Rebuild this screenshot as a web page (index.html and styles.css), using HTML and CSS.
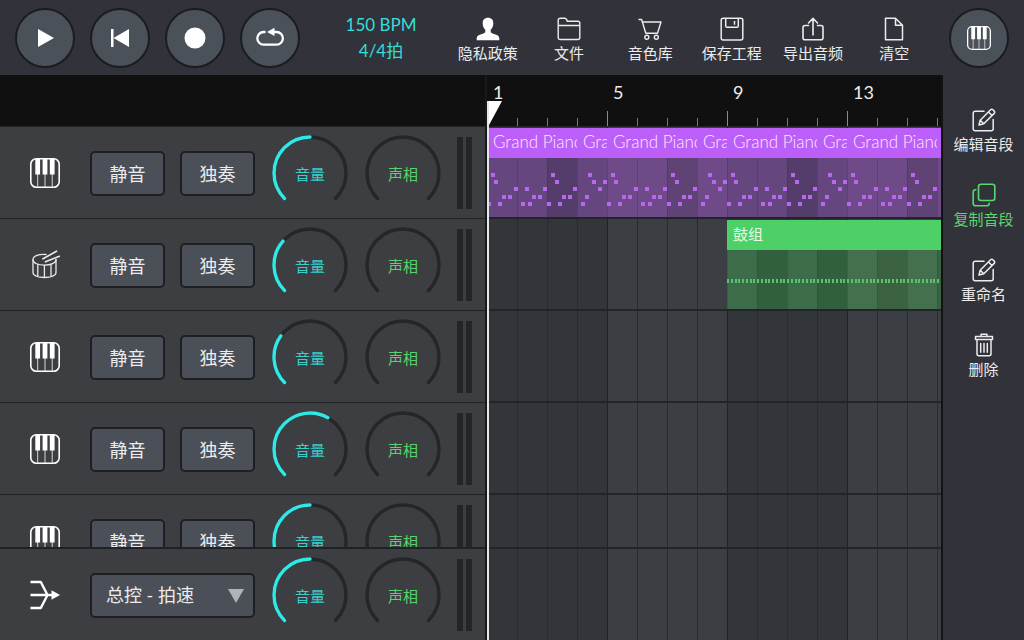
FILE: index.html
```html
<!DOCTYPE html>
<html lang="zh-CN">
<head>
<meta charset="utf-8">
<meta name="viewport" content="width=device-width, initial-scale=1">
<title>音轨编辑</title>
<link rel="stylesheet" href="styles.css">
</head>
<body>
<svg class="defs" aria-hidden="true">
  <symbol id="piano" viewBox="0 0 30 30">
    <rect x="0.8" y="0.8" width="28.4" height="28.4" rx="5.500" fill="none" stroke="#fff" stroke-width="1.6"/>
    <path d="M5.300 1h4.800v15.500H5.300zM12.600 1h4.800v15.500h-4.800zM19.800 1h4.800v15.500h-4.800z" fill="#fff"/>
    <path d="M7.700 16v13M15 16v13M22.200 16v13" stroke="#fff" stroke-width="0.8"/>
  </symbol>
  <symbol id="drum" viewBox="0 0 30 30">
    <g fill="none" stroke="#e8e8e8" stroke-width="1.300" stroke-linecap="round">
      <path d="M16 4.500C9 3.800 3 6 3 9.800c0 3.400 5.300 5.400 11.500 5.400S26 13 26 9.800"/>
      <path d="M3 10v12.500c0 3 5 5 11.500 5s11.500-2 11.500-5V9.500M7.800 14.500v12M14.400 15.300v12M21 14.500v12"/>
      <path d="M13 8.800L26.500 1.200M15.500 11.800L29.400 6.300" stroke-width="1.700"/>
    </g>
  </symbol>
  <symbol id="edit" viewBox="0 0 24 24">
    <g fill="none" stroke="currentColor" stroke-width="1.500" stroke-linecap="round" stroke-linejoin="round">
      <path d="M12 3.200H3.200a2 2 0 0 0-2 2v15.600a2 2 0 0 0 2 2h16a2 2 0 0 0 2-2v-9.300"/>
      <path d="M7 17l1.200-4.800L18.600 1.800a1.600 1.600 0 0 1 2.300 0l1.300 1.300a1.600 1.600 0 0 1 0 2.300L11.800 15.800zM16.500 4l3.500 3.500M8.300 12.300l3.400 3.400"/>
    </g>
  </symbol>
  <symbol id="dial" viewBox="0 0 76 76">
    <path d="M12.540 63.460A36 36 0 1 1 63.460 63.460" pathLength="100" fill="none" stroke-width="3.400" stroke-linecap="round"/>
  </symbol>
</svg>

<div class="app">
  <header class="topbar">
    <div class="transport">
      <button class="round" aria-label="播放"><svg width="30" height="30" viewBox="0 0 30 30"><path d="M8 6l16 9-16 9z" fill="#fff"/></svg></button>
      <button class="round" aria-label="回到开头"><svg width="30" height="30" viewBox="0 0 30 30"><path d="M6 6h2.500v18H6zM24 6v18L8.500 15z" fill="#fff"/></svg></button>
      <button class="round" aria-label="录音"><svg width="30" height="30" viewBox="0 0 30 30"><circle cx="15" cy="15" r="10.500" fill="#fff"/></svg></button>
      <button class="round" aria-label="循环"><svg width="30" height="30" viewBox="0 0 30 30"><path d="M10.500 9H8.600a6.300 6.300 0 0 0 0 12.600h13a6.300 6.300 0 0 0 0-12.600H17" fill="none" stroke="#fff" stroke-width="2.300"/><path d="M12 9l7.500-4.300v8.300z" fill="#fff"/></svg></button>
    </div>
    <button class="tempo"><span>150 BPM</span><span>4/4拍</span></button>
    <nav class="menu">
      <button class="tool"><svg class="glyph" viewBox="0 0 24 24"><path d="M12 .7c3.600 0 5.300 2.300 5.300 5.500 0 2.700-1 5.200-2.600 6.500v2.100c0 1.200 1.500 1.700 3.300 2.200 3.200.9 5.300 1.900 5.300 4.200v2.100H.7v-2.100c0-2.300 2.100-3.300 5.300-4.200 1.800-.5 3.300-1 3.300-2.200v-2.100C7.700 11.400 6.700 8.900 6.700 6.200 6.700 3 8.400.7 12 .7z" fill="#fff"/></svg><span>隐私政策</span></button>
      <button class="tool"><svg class="glyph" viewBox="0 0 24 24"><path d="M1.200 20.500V3.200a2 2 0 0 1 2-2h4.500a2 2 0 0 1 1.800 1.200l.8 1.800h10.500a2 2 0 0 1 2 2v14.300a2 2 0 0 1-2 2H3.200a2 2 0 0 1-2-2zM1.200 8.500h21.600" fill="none" stroke="currentColor" stroke-width="1.400"/></svg><span>文件</span></button>
      <button class="tool"><svg class="glyph" viewBox="0 0 24 24"><g fill="none" stroke="currentColor" stroke-width="1.400" stroke-linecap="round" stroke-linejoin="round"><path d="M1 2.500h2.600l4.200 13.700h11.700L23 5H4.600"/><circle cx="8.800" cy="20.300" r="2"/><circle cx="18.300" cy="20.300" r="2"/></g></svg><span>音色库</span></button>
      <button class="tool"><svg class="glyph" viewBox="0 0 24 24"><g fill="none" stroke="currentColor" stroke-width="1.500"><rect x="1.200" y="1.300" width="21.600" height="21.600" rx="2"/><path d="M5.700 1.300V9a1.300 1.300 0 0 0 1.300 1.300h10A1.300 1.300 0 0 0 18.300 9V1.300M14.500 4v3.800"/></g></svg><span>保存工程</span></button>
      <button class="tool"><svg class="glyph" viewBox="0 0 24 24"><path d="M7.500 8.500H4a2 2 0 0 0-2 2v10.300a2 2 0 0 0 2 2h16a2 2 0 0 0 2-2V10.500a2 2 0 0 0-2-2h-3.500M12 18V2M7.500 6L12 1.300 16.500 6" fill="none" stroke="currentColor" stroke-width="1.600" stroke-linecap="round"/></svg><span>导出音频</span></button>
      <button class="tool"><svg class="glyph" viewBox="0 0 24 24"><path d="M3.500 1.300h10l7 7v14.500h-17zM13.500 1.300v7h7" fill="none" stroke="currentColor" stroke-width="1.500" stroke-linejoin="round"/></svg><span>清空</span></button>
    </nav>
    <button class="round" aria-label="键盘"><svg width="24" height="24"><use href="#piano"/></svg></button>
  </header>

  <main class="workspace">
    <section class="mixer" aria-label="混音器">
      <div class="corner"></div>
      <div class="tracks">
        <div class="track">
          <svg class="instrument"><use href="#piano"/></svg>
          <div class="switches"><button class="key">静音</button><button class="key">独奏</button></div>
          <div class="knobs">
            <label class="knob volume"><svg><use href="#dial" class="rail"/><use href="#dial" class="level" style="stroke-dasharray:50 100"/></svg><span>音量</span><input type="range" value="50"></label>
            <label class="knob pan"><svg><use href="#dial" class="rail"/></svg><span>声相</span><input type="range"></label>
          </div>
          <div class="meter"><i></i><i></i></div>
        </div>
        <div class="track">
          <svg class="instrument"><use href="#drum"/></svg>
          <div class="switches"><button class="key">静音</button><button class="key">独奏</button></div>
          <div class="knobs">
            <label class="knob volume"><svg><use href="#dial" class="rail"/><use href="#dial" class="level" style="stroke-dasharray:32 100"/></svg><span>音量</span><input type="range" value="32"></label>
            <label class="knob pan"><svg><use href="#dial" class="rail"/></svg><span>声相</span><input type="range"></label>
          </div>
          <div class="meter"><i></i><i></i></div>
        </div>
        <div class="track">
          <svg class="instrument"><use href="#piano"/></svg>
          <div class="switches"><button class="key">静音</button><button class="key">独奏</button></div>
          <div class="knobs">
            <label class="knob volume"><svg><use href="#dial" class="rail"/><use href="#dial" class="level" style="stroke-dasharray:30 100"/></svg><span>音量</span><input type="range" value="30"></label>
            <label class="knob pan"><svg><use href="#dial" class="rail"/></svg><span>声相</span><input type="range"></label>
          </div>
          <div class="meter"><i></i><i></i></div>
        </div>
        <div class="track">
          <svg class="instrument"><use href="#piano"/></svg>
          <div class="switches"><button class="key">静音</button><button class="key">独奏</button></div>
          <div class="knobs">
            <label class="knob volume"><svg><use href="#dial" class="rail"/><use href="#dial" class="level" style="stroke-dasharray:61 100"/></svg><span>音量</span><input type="range" value="61"></label>
            <label class="knob pan"><svg><use href="#dial" class="rail"/></svg><span>声相</span><input type="range"></label>
          </div>
          <div class="meter"><i></i><i></i></div>
        </div>
        <div class="track">
          <svg class="instrument"><use href="#piano"/></svg>
          <div class="switches"><button class="key">静音</button><button class="key">独奏</button></div>
          <div class="knobs">
            <label class="knob volume"><svg><use href="#dial" class="rail"/><use href="#dial" class="level" style="stroke-dasharray:50 100"/></svg><span>音量</span><input type="range" value="50"></label>
            <label class="knob pan"><svg><use href="#dial" class="rail"/></svg><span>声相</span><input type="range"></label>
          </div>
          <div class="meter"><i></i><i></i></div>
        </div>
      </div>
      <div class="track master">
        <svg class="instrument" viewBox="0 0 30 30"><path d="M.5 2h10.300L17.500 15l-6.700 13H.5M.5 15H23" fill="none" stroke="#fff" stroke-width="2.400" stroke-linejoin="round"/><path d="M21.500 10.300L30 15l-8.500 4.700z" fill="#fff"/></svg>
        <div class="chooser">
          <select aria-label="总控"><option>总控 - 拍速</option></select>
          <svg class="caret" viewBox="0 0 16 14"><path d="M0 0h16L8 14z" fill="#b1b4b6"/></svg>
        </div>
        <div class="knobs">
          <label class="knob volume"><svg><use href="#dial" class="rail"/><use href="#dial" class="level" style="stroke-dasharray:50 100"/></svg><span>音量</span><input type="range" value="50"></label>
          <label class="knob pan"><svg><use href="#dial" class="rail"/></svg><span>声相</span><input type="range"></label>
        </div>
        <div class="meter"><i></i><i></i></div>
      </div>
    </section>

    <section class="timeline" aria-label="时间轴">
      <div class="ruler"><span>1</span><span>5</span><span>9</span><span>13</span></div>
      <div class="lanes">
        <div class="lane">
          <div class="clip keys" style="grid-column:1/17">
            <div class="names">
              <span class="wide">Grand Piano</span><span>Grand Piano</span>
              <span class="wide">Grand Piano</span><span>Grand Piano</span>
              <span class="wide">Grand Piano</span><span>Grand Piano</span>
              <span class="wide">Grand Piano</span><span>Grand Piano</span>
            </div>
            <svg class="notes">
              <pattern id="melody" width="120" height="60" patternUnits="userSpaceOnUse">
                <path stroke="#b768ec" stroke-width="4" d="M0 46h4M4 17h4M7 24h4M11 46h4M15 39h4M21 39h4M27 31h4M34 46h4M38 31h4M41 46h4M45 39h4M51 39h4M56 31h4M60 46h4M64 17h4M68 24h4M71 46h4M75 39h4M81 39h4M86 31h4M94 46h4M98 39h4M101 17h4M105 24h4M111 31h4M116 24h4"/>
              </pattern>
              <rect width="100%" height="100%" fill="url(#melody)"/>
            </svg>
          </div>
        </div>
        <div class="lane">
          <div class="clip drums" style="grid-column:9/17">
            <div class="names"><span class="wide">鼓组</span></div>
            <svg class="notes">
              <pattern id="beat" width="15" height="60" patternUnits="userSpaceOnUse">
                <path stroke="#56c46c" stroke-width="4" d="M0 31h2M4 31h2M8 31h2M11 31h2"/>
              </pattern>
              <rect width="100%" height="100%" fill="url(#beat)"/>
            </svg>
          </div>
        </div>
        <div class="lane"></div>
        <div class="lane"></div>
        <div class="lane"></div>
      </div>
      <div class="lane tempo-lane"></div>
      <svg class="flag" viewBox="0 0 15 25"><path d="M0 0h15L1.500 25H0z" fill="#fff"/></svg>
      <div class="playhead"></div>
    </section>

    <aside class="actions">
      <button class="tool"><svg class="glyph"><use href="#edit"/></svg><span>编辑音段</span></button>
      <button class="tool active"><svg class="glyph" viewBox="0 0 24 24"><g fill="none" stroke="currentColor" stroke-width="1.600" stroke-linecap="round"><rect x="6.500" y="1.200" width="16.300" height="16.300" rx="2.500"/><path d="M3.800 6.800H3.500a2.300 2.300 0 0 0-2.300 2.300v11.400a2.300 2.300 0 0 0 2.300 2.300h11.400a2.300 2.300 0 0 0 2.300-2.300v-.3"/></g></svg><span>复制音段</span></button>
      <button class="tool"><svg class="glyph"><use href="#edit"/></svg><span>重命名</span></button>
      <button class="tool"><svg class="glyph" viewBox="0 0 24 24"><g fill="none" stroke="currentColor" stroke-width="1.500" stroke-linecap="round" stroke-linejoin="round"><path d="M3.500 3.500h17v3h-17zM9 3.300V1.200h6v2.100M5 6.800v14a2 2 0 0 0 2 2h10a2 2 0 0 0 2-2v-14"/><path d="M8.700 10.500v8.700M12 10.500v8.700M15.300 10.500v8.700"/></g></svg><span>删除</span></button>
    </aside>
  </main>
</div>
</body>
</html>
```
FILE: styles.css
```css
* { box-sizing: border-box; }

body {
  margin: 0;
  background: #32333a;
  color: #ececec;
  font-family: Lato, "Noto Sans CJK SC", sans-serif;
  font-size: 15px;
}

button, select {
  margin: 0;
  padding: 0;
  border: 0;
  background: none;
  color: inherit;
  font: inherit;
  cursor: pointer;
}

.defs { position: absolute; width: 0; height: 0; }

.app { display: flex; flex-direction: column; height: 100vh; overflow: hidden; }

/* Top bar */
.topbar { display: flex; align-items: center; height: 75px; flex: none; padding: 0 15px; }
.transport { display: flex; gap: 15px; }

.round {
  display: flex;
  align-items: center;
  justify-content: center;
  flex: none;
  width: 60px;
  height: 60px;
  border: 2px solid #1b1c1f;
  border-radius: 50%;
  background: #4b5159;
}

.tempo {
  display: flex;
  flex-direction: column;
  align-items: center;
  width: 132px;
  margin-left: 15px;
  color: #35dcd8;
  font-size: 17px;
  line-height: 26px;
}

.menu { display: flex; flex: 1; align-self: stretch; padding-top: 17px; margin-right: 14px; }
.menu .tool { flex: 1; }

.tool { display: flex; flex-direction: column; align-items: center; line-height: 24px; white-space: nowrap; }
.glyph { width: 24px; height: 24px; }

/* Workspace */
.workspace { display: flex; flex: 1; min-height: 0; }

.mixer { display: flex; flex-direction: column; flex: none; border-right: 2px solid #17191b; }
.corner { height: 51px; flex: none; background: #101010; }
.tracks { flex: 1; min-height: 0; overflow: hidden; }

.track {
  display: flex;
  align-items: center;
  height: 92px;
  padding: 1px 13px 0 30px;
  background: #3c3e42;
  border-top: 1px solid #202226;
}
.master { flex: none; height: 93px; border-top-width: 2px; }

.instrument { width: 30px; height: 30px; margin-right: 30px; }
.switches { display: flex; gap: 15px; }

.key, .chooser select {
  width: 75px;
  height: 45px;
  border: 2px solid #1d1f22;
  border-radius: 5px;
  background: #4b5058;
  font-size: 18px;
}

.chooser { position: relative; }
.chooser select { appearance: none; width: 165px; padding-left: 14px; }
.caret { position: absolute; right: 11px; top: 16px; width: 16px; height: 14px; pointer-events: none; }

.knobs { display: flex; gap: 17px; margin: 0 16px 0 17px; }
.knob { display: grid; width: 76px; height: 76px; place-items: center; }
.knob > * { grid-area: 1 / 1; }
.knob svg { width: 76px; height: 76px; }
.knob input { width: 76px; height: 76px; margin: 0; opacity: 0; }
.knob span { line-height: 20px; padding-top: 2px; }
.rail { stroke: #24272a; }
.level { stroke: #2fe9e6; }
.volume { color: #35cfcd; }
.pan { color: #57d36c; }

.meter { display: flex; gap: 3px; }
.meter i { width: 6px; height: 72px; background: #232629; }

/* Timeline */
.timeline { position: relative; display: flex; flex-direction: column; flex: 1; min-width: 0; overflow: hidden; }

.ruler {
  display: grid;
  grid-auto-flow: column;
  grid-auto-columns: 120px;
  height: 51px;
  flex: none;
  padding-top: 4px;
  background:
    repeating-linear-gradient(90deg, #8a8a8a 0 1px, transparent 1px 120px) 0 36px / 100% 15px no-repeat,
    repeating-linear-gradient(90deg, #777 0 1px, transparent 1px 30px) 0 43px / 100% 8px no-repeat,
    #101010;
  font-size: 18px;
  line-height: 26px;
}
.ruler span { padding-left: 6px; }

.lanes { flex: 1; min-height: 0; overflow: hidden; }

.lane {
  display: grid;
  grid-template-columns: repeat(16, 30px);
  height: 92px;
  padding-top: 1px;
  overflow: hidden;
  border: solid #222428;
  border-width: 1px 0;
  background:
    repeating-linear-gradient(90deg, #202225 0 1px, transparent 1px 120px),
    repeating-linear-gradient(90deg, #292b2f 0 1px, transparent 1px 30px),
    repeating-linear-gradient(90deg, #323539 0 120px, #3b3e42 120px 240px);
}
.tempo-lane { flex: none; height: 93px; border-width: 2px 0 0; }

.clip { display: flex; flex-direction: column; min-width: 0; color: #fbeaff; }
.names { display: flex; flex: none; height: 30px; line-height: 28px; }
.names span { width: 30px; padding-left: 6px; overflow: hidden; white-space: nowrap; }
.names .wide { width: 90px; }
.notes { flex: 1; width: 100%; min-height: 0; }

.keys { font-size: 17px; font-weight: 300; }
.keys .names { background: #bb5ff8; }
.keys .notes {
  background:
    repeating-linear-gradient(90deg, #3c2a5055 0 1px, transparent 1px 30px),
    repeating-linear-gradient(90deg, #66467f 0 60px, #543d6a 60px 90px, #66467f 90px 120px, #6e4b88 120px 180px, #5e4374 180px 210px, #6e4b88 210px 240px);
}
.drums { color: #e4fbe8; }
.drums .names { background: #4dd067; }
.drums .notes {
  background:
    repeating-linear-gradient(90deg, #22482b55 0 1px, transparent 1px 30px),
    repeating-linear-gradient(90deg, #3d6c4a 0 30px, #325f3e 30px 60px, #3d6c4a 60px 90px, #325f3e 90px 120px, #44704d 120px 150px, #3b6341 150px 180px, #44704d 180px 210px, #3b6341 210px 240px);
}

.flag { position: absolute; left: 0; top: 26px; width: 15px; height: 25px; }
.playhead { position: absolute; left: 0; top: 26px; bottom: 0; width: 2px; background: #e6e6e6; }

/* Side actions */
.actions {
  display: flex;
  flex-direction: column;
  gap: 27px;
  flex: none;
  width: 83px;
  padding-top: 33px;
  border-left: 2px solid #121315;
}
.active { color: #57d76d; }
```
